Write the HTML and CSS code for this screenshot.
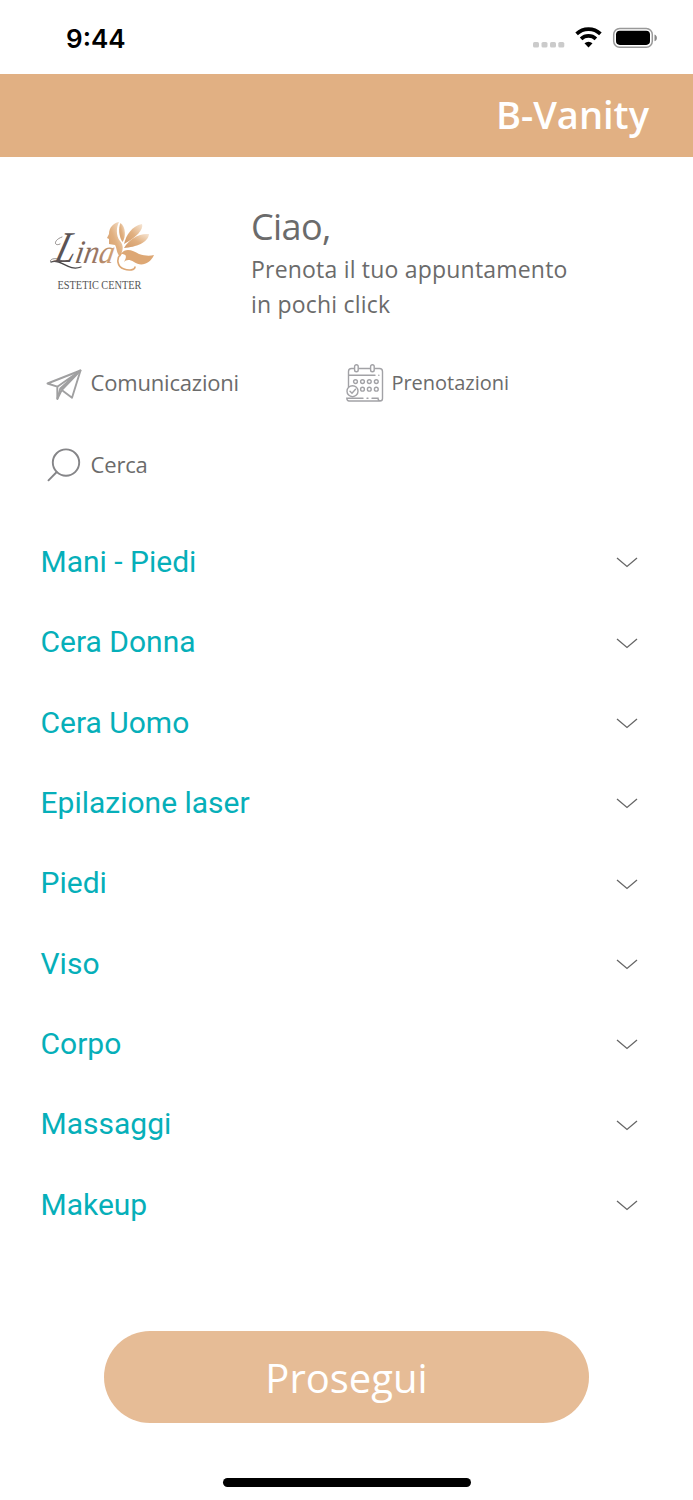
FILE: index.html
```html
<!DOCTYPE html>
<html lang="it">
<head>
<meta charset="utf-8">
<title>B-Vanity</title>
<link rel="stylesheet" href="styles.css">
</head>
<body>
<div class="app">
  <div class="status">
    <span class="clock">9:44</span>
    <svg class="indicators" width="126" height="26" viewBox="0 0 126 26">
      <g fill="#cbcbcb"><rect x="0" y="17" width="6" height="5.600" rx="1.600"/><rect x="8.500" y="17" width="6" height="5.600" rx="1.600"/><rect x="17" y="17" width="6" height="5.600" rx="1.600"/><rect x="25.300" y="17" width="6" height="5.600" rx="1.600"/></g>
      <g fill="none" stroke="#000" stroke-width="3.700"><path d="M43.600 8.900a17.200 17.200 0 0 1 23.800 0"/><path d="M48.100 13.800a10.800 10.800 0 0 1 14.800 0"/></g>
      <path d="M51.500 18.200a6 6 0 0 1 8 0l-4 4.300z"/>
      <rect x="80.700" y="3.400" width="38.600" height="18.800" rx="6" fill="none" stroke="#999" stroke-width="1.500"/>
      <rect x="83" y="5.700" width="34" height="14.200" rx="3.800"/>
      <path d="M121.500 9.500c3.200 1.200 3.200 5.600 0 6.800z" fill="#888"/>
    </svg>
  </div>
  <header class="topbar"><h1>B-Vanity</h1></header>
  <main>
    <section class="welcome">
      <svg class="logo" width="130" height="90" viewBox="0 0 130 90">
        <defs>
          <linearGradient id="gold" x1="0" y1="1" x2="1" y2="0"><stop offset="0" stop-color="#d29a68"/><stop offset=".5" stop-color="#e1b080"/><stop offset="1" stop-color="#f7e7d6"/></linearGradient>
          <linearGradient id="ink" x1="0" y1="0" x2="1" y2="0"><stop offset="0" stop-color="#6d5d56"/><stop offset=".5" stop-color="#997563"/><stop offset="1" stop-color="#d9a778"/></linearGradient>
        </defs>
        <path fill="url(#gold)" d="M79 12C73 13 69 18 69 24L67 28 69 29V34L75 35C77 38 76 42 80 47 82 42 85 37 80 31 76 26 76 18 79 12Z"/>
        <path fill="url(#gold)" d="M80.500 13C86 17 86 27 82.500 32 79 27 78 18 80.500 13Z"/>
        <path fill="url(#gold)" d="M84 34C86 25 92 16 102 14 104 19 96 28 84 34Z"/>
        <path fill="url(#gold)" d="M84 38C89 29 99 23 109 24 108 33 96 37 84 38Z"/>
        <path fill="#dda774" d="M81 44C86 37 93 41 99 44 105 46 110 46 114 45 110 54 101 57 94 52 89 49 86 50 84 52 88 45 85 44 81 44Z"/>
        <path fill="none" stroke="#dda774" stroke-width="1.600" stroke-linecap="round" d="M81 44C76 48 77 57 84 59 89 61 95 60 95 57"/>
        <path fill="none" stroke="#77716f" stroke-width=".8" stroke-linecap="round" d="M22 27C13 30 14 37 20 34M22 51C15 46 8 50 11 52"/>
        <path fill="none" stroke="#464446" stroke-width="1.300" stroke-linecap="round" d="M11 52C21 48 28 62 41 57"/>
        <text class="logo-initial" fill="#5b5354" transform="translate(13 52) skewX(-16)" textLength="20" lengthAdjust="spacingAndGlyphs">L</text>
        <text class="logo-script" transform="translate(34 53) skewX(-10)" fill="url(#ink)" textLength="39" lengthAdjust="spacingAndGlyphs">ina</text>
        <text class="logo-caption" x="17.500" y="78.700" textLength="84" lengthAdjust="spacingAndGlyphs">ESTETIC CENTER</text>
      </svg>
      <div class="greeting"><h2>Ciao,</h2><p>Prenota il tuo appuntamento<br>in pochi click</p></div>
    </section>
    <nav class="shortcuts">
      <a class="shortcut">
        <svg width="38" height="40" viewBox="0 0 38 40" fill="none" stroke="#a0a0a1" stroke-width="1.900" stroke-linejoin="round"><path d="M1.500 19.500 34.500 6.500 26 33.800 15.700 26 11.300 35V22.700L1.500 19.500Z"/><path d="M11.300 22.700 34.500 6.500 14.300 24.500 11.300 35M34.500 6.500 15.700 26"/></svg>
        <span>Comunicazioni</span>
      </a>
      <a class="shortcut booking">
        <svg width="38" height="40" viewBox="0 0 38 40" fill="none" stroke="#a2a2a6" stroke-width="1.400" stroke-linecap="round"><path d="M8 4.500H5.500Q2.500 4.500 2.500 7.500V23M13 4.500H24M29 4.500H33.500Q36.500 4.500 36.500 7.500V34.500Q36.500 37 34 37H3Q1 37 .8 34.200H17M21 34.200h1M26 34.200H32Q32 36.500 34.500 37M3 11.300H29M32.800 11.300h.1"/><rect x="8.600" y=".8" width="3.600" height="7" rx="1.800"/><rect x="24.600" y=".8" width="3.600" height="7" rx="1.800"/><circle cx="9.500" cy="17.600" r="1.900"/><circle cx="16.500" cy="17.600" r="1.900"/><circle cx="23.300" cy="17.600" r="1.900"/><circle cx="30.300" cy="17.600" r="1.900"/><circle cx="16.500" cy="25.200" r="1.900"/><circle cx="23.300" cy="25.200" r="1.900"/><circle cx="30.300" cy="25.200" r="1.900"/><circle cx="6.500" cy="27.200" r="5.500"/><path d="m4 27.200 2 2 3.500-4"/></svg>
        <span>Prenotazioni</span>
      </a>
      <a class="shortcut search">
        <svg width="38" height="40" viewBox="0 0 38 40" fill="none" stroke="#858588" stroke-width="1.900" stroke-linecap="round"><circle cx="20" cy="16.600" r="13.200"/><path d="M10.700 26 2.500 34.300"/></svg>
        <span>Cerca</span>
      </a>
    </nav>
    <ul class="categories">
      <li><span>Mani - Piedi</span><svg class="chevron" viewBox="0 0 22 11"><path d="m1 1 10 8.500L21 1"/></svg></li>
      <li><span>Cera Donna</span><svg class="chevron" viewBox="0 0 22 11"><path d="m1 1 10 8.500L21 1"/></svg></li>
      <li><span>Cera Uomo</span><svg class="chevron" viewBox="0 0 22 11"><path d="m1 1 10 8.500L21 1"/></svg></li>
      <li><span>Epilazione laser</span><svg class="chevron" viewBox="0 0 22 11"><path d="m1 1 10 8.500L21 1"/></svg></li>
      <li><span>Piedi</span><svg class="chevron" viewBox="0 0 22 11"><path d="m1 1 10 8.500L21 1"/></svg></li>
      <li><span>Viso</span><svg class="chevron" viewBox="0 0 22 11"><path d="m1 1 10 8.500L21 1"/></svg></li>
      <li><span>Corpo</span><svg class="chevron" viewBox="0 0 22 11"><path d="m1 1 10 8.500L21 1"/></svg></li>
      <li><span>Massaggi</span><svg class="chevron" viewBox="0 0 22 11"><path d="m1 1 10 8.500L21 1"/></svg></li>
      <li><span>Makeup</span><svg class="chevron" viewBox="0 0 22 11"><path d="m1 1 10 8.500L21 1"/></svg></li>
    </ul>
  </main>
  <footer><button class="proceed">Prosegui</button><div class="home-bar"></div></footer>
</div>
</body>
</html>
```
FILE: styles.css
```css
* { box-sizing: border-box; }
body { margin: 0; background: #fff; font-family: "Open Sans", sans-serif; color: #6b6b6b; }
h1, h2, p, ul { margin: 0; padding: 0; font-weight: 400; }
.app { width: 693px; height: 1500px; display: flex; flex-direction: column; overflow: hidden; }
.status { height: 74px; padding: 25px 34px 0 66px; display: flex; justify-content: space-between; align-items: flex-start; }
.clock { font: 600 26px/27px Inter, sans-serif; color: #000; }
.topbar { height: 83px; background: #e1b083; padding: 0 44px 0 0; display: flex; justify-content: flex-end; }
.topbar h1 { font-size: 38px; line-height: 80px; font-weight: 600; letter-spacing: 0; color: #fff; }
main { flex: 1; }
.welcome { height: 198px; padding: 53px 0 0 40px; display: flex; gap: 81px; }
.logo-initial { font: italic 44px "Liberation Serif", serif; }
.logo-script { font: italic 33px "Liberation Serif", serif; }
.logo-caption { font: 12px "Liberation Serif", serif; fill: #555; }
.greeting h2 { font-size: 36px; line-height: 34px; letter-spacing: -.6px; }
.greeting p { font-size: 23px; line-height: 35px; margin-top: 8px; letter-spacing: .2px; }
.shortcuts { display: grid; grid-template-columns: 300px 1fr; grid-template-rows: 82px 82px; padding: 0 0 0 46px; height: 167px; }
.shortcut { display: flex; align-items: flex-start; gap: 7px; font-size: 22px; padding-top: 9px; line-height: 38px; letter-spacing: -.2px; }
.shortcut span { margin: -1px 0 0 -.4px; }
.booking { font-size: 20px; letter-spacing: 0; }
.booking span { margin: 0 0 0 .4px; }
.categories { list-style: none; padding: 0 55px 0 40.5px; }
.categories li { height: 80.35px; display: flex; align-items: center; justify-content: space-between; font: 30px/40px Roboto, sans-serif; color: #06afb9; }
.categories span { margin-top: -.6px; }
.chevron { width: 22px; height: 11px; margin-top: 1px; fill: none; stroke: #666; stroke-width: 1.300; }
footer { height: 169px; display: flex; flex-direction: column; align-items: center; }
.proceed { width: 485px; height: 92px; padding: 0; border: 0; border-radius: 46px; background: #e6bc96; color: #fff; font: 40px "Open Sans", sans-serif; }
.home-bar { width: 248px; height: 9px; margin-top: 55px; border-radius: 5px; background: #000; }
```
